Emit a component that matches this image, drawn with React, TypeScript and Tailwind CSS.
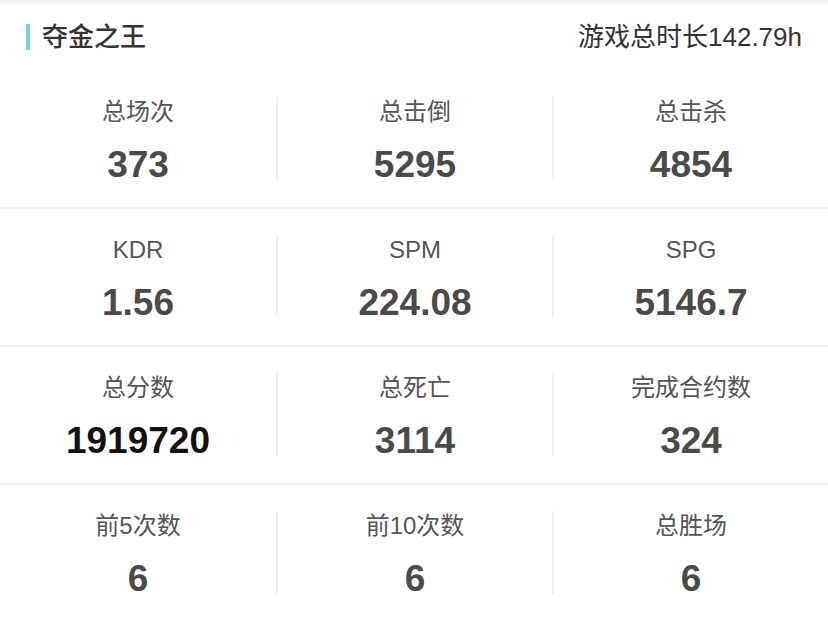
import React from 'react';

const rows: { label: string; value: string; dark?: boolean }[][] = [
  [
    { label: '总场次', value: '373' },
    { label: '总击倒', value: '5295' },
    { label: '总击杀', value: '4854' },
  ],
  [
    { label: 'KDR', value: '1.56' },
    { label: 'SPM', value: '224.08' },
    { label: 'SPG', value: '5146.7' },
  ],
  [
    { label: '总分数', value: '1919720', dark: true },
    { label: '总死亡', value: '3114' },
    { label: '完成合约数', value: '324' },
  ],
  [
    { label: '前5次数', value: '6' },
    { label: '前10次数', value: '6' },
    { label: '总胜场', value: '6' },
  ],
];

const cjk = { fontFamily: '"Liberation Sans", "Noto Sans CJK SC", sans-serif' };

export default function App() {
  return (
    <div className="w-[828px] h-[618px] bg-white overflow-hidden" style={cjk}>
      <div className="h-[4px] bg-[#f2f2f2]" />
      {/* 标题栏 */}
      <div className="h-[66px] flex items-center justify-between pl-[26px] pr-[26px]">
        <div className="flex items-center gap-[12px]">
          <div className="w-[4px] h-[26px] bg-[#74d8d1]" />
          <span className="text-[26px] font-medium text-[#333]">夺金之王</span>
        </div>
        <span className="text-[26px] text-[#333]">游戏总时长142.79h</span>
      </div>
      {rows.map((row, i) => (
        <div
          key={i}
          className={`grid grid-cols-3 pb-[27px] ${i > 0 ? 'pt-[26px] border-t-2 border-[#f0f0f0]' : 'pt-[27px]'}`}
        >
          {row.map((cell, j) => (
            <div
              key={j}
              className={`flex flex-col items-center h-[83px] ${j > 0 ? 'border-l-2 border-[#f0f0f0]' : ''}`}
            >
              <div className="h-[30px] leading-[30px] text-[24px] text-[#555]">{cell.label}</div>
              <div
                className={`mt-[21px] leading-[34px] text-[37px] font-bold ${cell.dark ? 'text-[#111]' : 'text-[#4a4a4a]'}`}
              >
                {cell.value}
              </div>
            </div>
          ))}
        </div>
      ))}
    </div>
  );
}
